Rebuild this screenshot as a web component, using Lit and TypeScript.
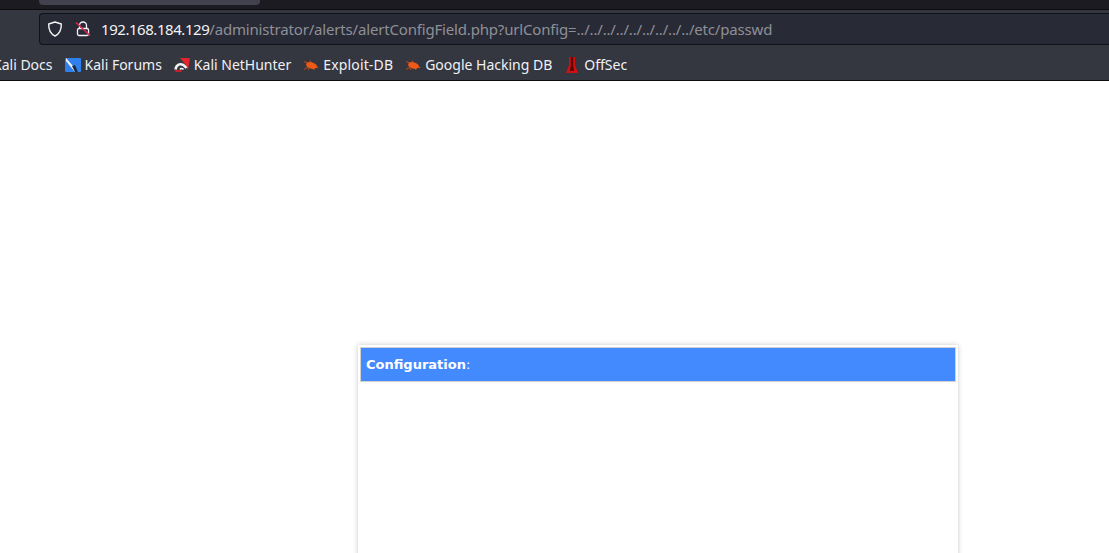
import { LitElement, html, css, svg } from "lit";
import { customElement } from "lit/decorators.js";

const bug = svg`<svg width="16" height="16" viewBox="0 0 16 16"><path d="M1 4.500 5 6M1 12.500 5 10M5 13l1-2M7 3.500 8.500 6M11 13l-1-3" stroke="#b84e1e" stroke-width="1" fill="none"/><ellipse cx="8.500" cy="8.500" rx="5.500" ry="3.200" fill="#ee5a16" transform="rotate(14 8.500 8.500)"/><path d="M13 9l3 1.500-3 .5z" fill="#d9541a"/></svg>`;

@customElement("app-root")
export class AppRoot extends LitElement {
  static styles = css`
    :host { display: block; height: 553px; overflow: hidden; background: #fff; font-family: "Noto Sans", sans-serif; }
    .tabs { height: 9px; background: #1c1b22; border-bottom: 1px solid #0c0c0d; box-sizing: content-box; }
    .tab { width: 221px; height: 5px; margin-left: 39px; background: #42414e; border-radius: 0 0 4px 4px; }
    .chrome { background: #343640; border-bottom: 1px solid #0c0c10; height: 71px; box-sizing: border-box; overflow: hidden; }
    .toolbar { padding: 3px 0 0 39px; height: 35px; box-sizing: border-box; }
    .url { display: flex; align-items: center; height: 32px; box-sizing: border-box; background: #282a36; border: 1px solid #111218; border-right: none; border-radius: 4px 0 0 4px; }
    .url svg { flex: none; display: block; }
    .shield { margin-left: 7px; }
    .lock { margin-left: 12px; }
    .addr { margin-left: 10px; font-size: 15px; color: #8f9096; white-space: nowrap; letter-spacing: -0.175px; }
    .host { color: #f2f2f4; letter-spacing: -0.45px; }
    .marks { display: flex; align-items: center; height: 31px; padding-top: 4px; margin-left: -7px; font-size: 14px; color: #f0f1f4; white-space: nowrap; }
    .mark { display: flex; align-items: center; gap: 4px; margin-right: 12px; }
    .mark svg { display: block; flex: none; }
    .wide { letter-spacing: 0.15px; }
    .page { padding: 264px 0 0 358px; }
    .panel { width: 600px; height: 300px; box-sizing: border-box; padding: 2px; background: #fff; box-shadow: 0 0 5px rgba(0,0,0,.22); }
    .head { height: 35px; box-sizing: border-box; background: #448aff; border: 1px solid #d2d2d2; color: #fff; font-family: "DejaVu Sans", sans-serif; font-size: 13px; line-height: 33px; padding-left: 5px; }
    .head b { font-weight: 700; }
  `;
  render() {
    return html`
      <div class="tabs"><div class="tab"></div></div>
      <div class="chrome">
        <div class="toolbar">
          <div class="url">
            <svg class="shield" width="16" height="16" viewBox="0 0 16 16"><path d="M8 1 14.300 3 C14.500 9 12.500 12.800 8 15 C3.500 12.800 1.500 9 1.700 3Z" fill="none" stroke="#f4f4f6" stroke-width="1.400" stroke-linejoin="round"/></svg>
            <svg class="lock" width="16" height="16" viewBox="0 0 16 16"><path d="M4.500 7V4.500a3.500 3.500 0 0 1 7 0V7" fill="none" stroke="#f4f4f6" stroke-width="1.300"/><rect x="2.500" y="7.500" width="11" height="7" rx="1.500" fill="none" stroke="#f4f4f6" stroke-width="1.300"/><path d="M1 1.500 15 14.500" stroke="#e22850" stroke-width="1.500"/></svg>
            <span class="addr"><span class="host">192.168.184.129</span>/administrator/alerts/alertConfigField.php?urlConfig=../../../../../../../../../etc/passwd</span>
          </div>
        </div>
        <div class="marks">
          <div class="mark"><span>Kali Docs</span></div>
          <div class="mark">
            <svg width="16" height="16" viewBox="0 0 16 16"><rect y="1" width="16" height="14" rx="1" fill="#2f80ed"/><path d="M1 1 8 9l5 6h-3L5 9 1 4z" fill="#eef2f6"/><path d="M7 9l3-1 3 7h-3z" fill="#1b2a44"/></svg>
            <span>Kali Forums</span>
          </div>
          <div class="mark">
            <svg width="16" height="16" viewBox="0 0 16 16"><path d="M6 1h10l-2 12-3-6z" fill="#e0252c"/><path d="M1.500 12.500C2 8 7 4 12.500 11" fill="none" stroke="#f2f2f2" stroke-width="2.500"/><path d="M6 12.500c1-1.500 2.500-1 3.500 0" fill="none" stroke="#f2f2f2" stroke-width="1.500"/><path d="M0 13h7l1 2H2z" fill="#c81e28"/></svg>
            <span>Kali NetHunter</span>
          </div>
          <div class="mark">${bug}<span class="wide">Exploit-DB</span></div>
          <div class="mark">${bug}<span>Google Hacking DB</span></div>
          <div class="mark">
            <svg width="16" height="18" viewBox="0 0 16 18"><path d="M5 1h6v8l3 8H2l3-8z" fill="#d01010"/><path d="M6.800 1h2.400v9l1 5H5.800l1-5z" fill="#5a0505"/></svg>
            <span>OffSec</span>
          </div>
        </div>
      </div>
      <div class="page">
        <div class="panel"><div class="head"><b>Configuration</b>:</div></div>
      </div>
    `;
  }
}
